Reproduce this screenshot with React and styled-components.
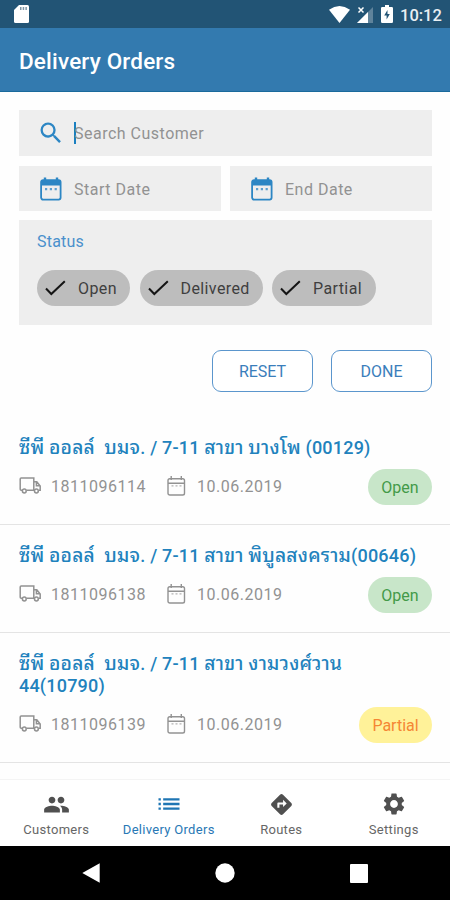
import React from 'react'
import styled, { createGlobalStyle } from 'styled-components'
import { MdSearch, MdPeople, MdList, MdDirections, MdSettings } from 'react-icons/md'

const orders = [
    { name: 'ซีพี ออลล์  บมจ. / 7-11 สาขา บางโพ (00129)', number: '1811096114', date: '10.06.2019', status: 'Open' },
    { name: 'ซีพี ออลล์  บมจ. / 7-11 สาขา พิบูลสงคราม(00646)', number: '1811096138', date: '10.06.2019', status: 'Open' },
    { name: 'ซีพี ออลล์  บมจ. / 7-11 สาขา งามวงศ์วาน\n44(10790)', number: '1811096139', date: '10.06.2019', status: 'Partial' },
]

const tabs = [
    { label: 'Customers', icon: MdPeople, size: 27 },
    { label: 'Delivery Orders', icon: MdList, size: 28, active: true },
    { label: 'Routes', icon: MdDirections, size: 25 },
    { label: 'Settings', icon: MdSettings, size: 26 },
]

function SdCard() {
    return (
        <svg width="15" height="18" viewBox="0 0 15 18">
            <path d="M5 0h8.500Q15 0 15 1.500v15Q15 18 13.500 18H1.500Q0 18 0 16.500V5z" fill="#fff" />
            <path d="M6 2h1.500v3H6zM8.700 2h1.500v3H8.700zM11.400 2h1.500v3h-1.500z" fill="#7f97a8" />
        </svg>
    )
}

function Wifi() {
    return (
        <svg width="21" height="17" viewBox="0 0 21 17">
            <path d="M0 3.800Q10.500-3.600 21 3.800L10.500 17z" fill="#fff" />
        </svg>
    )
}

function Signal() {
    return (
        <svg width="17" height="17" viewBox="0 0 17 17">
            <path d="M16 1v16H0z" fill="#fff" opacity=".28" />
            <path d="M11 6v11H0z" fill="#fff" />
            <path d="M1.500 1.500l5 5M6.500 1.500l-5 5" stroke="#fff" strokeWidth="1.500" />
        </svg>
    )
}

function Battery() {
    return (
        <svg width="12" height="18" viewBox="0 0 12 18">
            <path d="M4 0h4v2h2.800Q12 2 12 3.200v13.600Q12 18 10.800 18H1.200Q0 18 0 16.800V3.200Q0 2 1.200 2H4z" fill="#fff" />
            <path d="M6.500 5L3.200 10.500h2.400V14.500L8.800 9H6.500z" fill="#225475" />
        </svg>
    )
}

function Calendar({ filled }) {
    return filled ? (
        <svg width="22" height="24" viewBox="0 0 22 24">
            <rect x="1.100" y="3.100" width="19.500" height="19.500" rx="2" fill="none" stroke="currentColor" strokeWidth="1.800" />
            <path d="M1 4h20v4.500H1zM3.800.5h2.400V5H3.800zM15.800.5h2.400V5h-2.400z" fill="currentColor" />
            <path d="M5 11h2.200v2.200H5zM9.800 11H12v2.200H9.800zM14.600 11h2.200v2.200h-2.200z" fill="currentColor" opacity=".75" />
        </svg>
    ) : (
        <svg width="19" height="20" viewBox="0 0 19 20">
            <rect x="1" y="2.800" width="16.500" height="16.200" rx="1.800" fill="none" stroke="currentColor" strokeWidth="1.400" />
            <path d="M1 7.200h16.500M4.200 0v4M14.300 0v4" fill="none" stroke="currentColor" strokeWidth="1.400" />
            <path d="M4.500 9.800h10" stroke="currentColor" strokeWidth="1.300" strokeDasharray="2 2" opacity=".7" />
        </svg>
    )
}

function Truck() {
    return (
        <svg width="22" height="17" viewBox="0 0 22 17" fill="none" stroke="currentColor" strokeWidth="1.500">
            <path d="M3.200 13.200H2.200Q1.200 13.200 1.200 12.200V2Q1.200 1 2.200 1H14.800V13.200H7.500M14.800 4.800h3L21.200 9v4.200H20M17.400 5v3.800h3.600" />
            <circle cx="5.300" cy="14" r="1.900" />
            <circle cx="17.400" cy="14" r="1.900" />
        </svg>
    )
}

function Check() {
    return (
        <svg width="21" height="16" viewBox="0 0 21 16">
            <path d="M1 8.500l5.300 5.500L19.800 1.200" fill="none" stroke="#151515" strokeWidth="2" />
        </svg>
    )
}

// Thai runs are set a little larger than the Latin text around them
function Name({ children }) {
    return children.split(/([\u0E00-\u0E7F]+)/).map((part, i) => (
        i % 2 ? <Thai key={i}>{part}</Thai> : part
    ))
}

function App() {
    return (
        <Screen>
            <GlobalStyle />
            <StatusBar>
                <SdCard />
                <StatusIcons>
                    <Wifi />
                    <Signal />
                    <Battery />
                    <Clock>10:12</Clock>
                </StatusIcons>
            </StatusBar>
            <Header>Delivery Orders</Header>

            <Filters>
                <Field $height={46}>
                    <FieldIcon $pull><MdSearch size={28} /></FieldIcon>
                    <Caret />
                    <Placeholder $afterCaret>Search Customer</Placeholder>
                </Field>
                <Dates>
                    <Field $height={45}>
                        <FieldIcon><Calendar filled /></FieldIcon>
                        <Placeholder>Start Date</Placeholder>
                    </Field>
                    <Field $height={45}>
                        <FieldIcon><Calendar filled /></FieldIcon>
                        <Placeholder>End Date</Placeholder>
                    </Field>
                </Dates>
                <StatusBox>
                    <StatusLabel>Status</StatusLabel>
                    <Chips>
                        <Chip $width={93}><Check />Open</Chip>
                        <Chip $width={123}><Check />Delivered</Chip>
                        <Chip $width={104}><Check />Partial</Chip>
                    </Chips>
                </StatusBox>
                <Actions>
                    <Button>RESET</Button>
                    <Button>DONE</Button>
                </Actions>
            </Filters>

            <List>
                {orders.map((order) => (
                    <Order key={order.number}>
                        <OrderName><Name>{order.name}</Name></OrderName>
                        <OrderMeta>
                            <Truck />
                            <OrderNumber>{order.number}</OrderNumber>
                            <Calendar />
                            <OrderDate>{order.date}</OrderDate>
                            <Badge $partial={order.status === 'Partial'}>{order.status}</Badge>
                        </OrderMeta>
                    </Order>
                ))}
            </List>

            <TabBar>
                {tabs.map(({ label, icon: Icon, size, active }) => (
                    <Tab key={label} $active={active}>
                        <TabIcon><Icon size={size} /></TabIcon>
                        {label}
                    </Tab>
                ))}
            </TabBar>
            <SystemBar>
                <SystemKey>
                    <svg width="18" height="20" viewBox="0 0 18 20"><path d="M17.700.3v19.400L.3 10z" fill="#fff" /></svg>
                </SystemKey>
                <SystemKey>
                    <svg width="20" height="20" viewBox="0 0 20 20"><circle cx="10" cy="10" r="9.700" fill="#fff" /></svg>
                </SystemKey>
                <SystemKey>
                    <svg width="18" height="19" viewBox="0 0 18 19"><rect width="18" height="19" rx="1" fill="#fff" /></svg>
                </SystemKey>
            </SystemBar>
        </Screen>
    )
}

export default App

const GlobalStyle = createGlobalStyle`
    * {
        box-sizing: border-box;
    }
    body {
        margin: 0;
        background: #fff;
    }
    svg {
        display: block;
        flex-shrink: 0;
    }
`

const Screen = styled.div`
    width: 450px;
    height: 900px;
    display: flex;
    flex-direction: column;
    overflow: hidden;
    background: #fefefe;
    font-family: Roboto, "Noto Sans", sans-serif;
`

const StatusBar = styled.div`
    height: 28px;
    flex-shrink: 0;
    display: flex;
    align-items: center;
    justify-content: space-between;
    padding: 0 7px 0 14px;
    background: #225475;
`

const StatusIcons = styled.div`
    display: flex;
    align-items: center;
    gap: 7px;
`

const Clock = styled.span`
    width: 43px;
    margin-top: 2px;
    font-size: 16.5px;
    font-weight: 500;
    color: #e9eff3;
    white-space: nowrap;
`

const Header = styled.div`
    height: 64px;
    flex-shrink: 0;
    padding: 3px 19px 0;
    display: flex;
    align-items: center;
    background: #337aaf;
    border-bottom: 1px solid #1a6a9c;
    color: #fff;
    font-size: 22.5px;
    font-weight: 500;
    letter-spacing: 0.18px;
`

const Filters = styled.div`
    flex-shrink: 0;
    padding: 18px 18px 0 19px;
    display: flex;
    flex-direction: column;
    gap: 9px;
`

const Field = styled.div`
    flex: 1;
    min-height: ${(props) => props.$height}px;
    display: flex;
    align-items: center;
    padding-left: 18px;
    background: #eee;
`

const FieldIcon = styled.div`
    width: 37px;
    padding-left: ${(props) => (props.$pull ? 0 : 3)}px;
    display: flex;
    color: #2c86c4;
`

const Caret = styled.div`
    width: 2px;
    height: 22px;
    background: #1a7fc0;
`

const Placeholder = styled.span`
    margin-left: ${(props) => (props.$afterCaret ? -2 : 0)}px;
    padding-top: 1px;
    font-size: 16px;
    letter-spacing: 0.5px;
    color: #929292;
`

const Dates = styled.div`
    margin-top: 1px;
    display: flex;
    gap: 9px;
`

const StatusBox = styled.div`
    height: 105px;
    padding: 12px 18px;
    background: #eee;
`

const StatusLabel = styled.div`
    font-size: 16px;
    line-height: 20px;
    letter-spacing: 0.2px;
    color: #4a90cc;
`

const Chips = styled.div`
    margin-top: 18px;
    display: flex;
    gap: 9.5px;
`

const Chip = styled.div`
    width: ${(props) => props.$width}px;
    height: 36px;
    padding-left: 8px;
    display: flex;
    align-items: center;
    gap: 12px;
    border-radius: 18px;
    background: #bdbdbd;
    color: #3f3f3f;
    font-size: 16px;
    letter-spacing: 0.4px;
`

const Actions = styled.div`
    margin-top: 16px;
    display: flex;
    justify-content: flex-end;
    gap: 18px;
`

const Button = styled.button`
    width: 101px;
    height: 42px;
    padding: 0;
    border: 1px solid #5b96cd;
    border-radius: 9px;
    background: #fff;
    color: #3a7ebb;
    font-family: inherit;
    font-size: 16px;
`

const List = styled.div`
    flex: 1;
    min-height: 0;
    padding-top: 25px;
`

const Order = styled.div`
    padding: 20px 18px 19px 19px;
    border-bottom: 1px solid #e4e4e4;
`

const OrderName = styled.div`
    font-size: 18px;
    font-weight: 500;
    line-height: 22px;
    letter-spacing: 0.2px;
    white-space: pre;
    color: #2182bd;
`

const Thai = styled.span`
    font-family: "Noto Sans Thai Looped", "Noto Looped Thai", "Droid Sans Thai", Loma, Garuda, Waree, Roboto, "Noto Sans", sans-serif;
    font-size: 19.2px;
    line-height: 0;
`

const OrderMeta = styled.div`
    margin-top: 10px;
    height: 36px;
    display: flex;
    align-items: center;
    color: #929292;
    font-size: 16px;
    letter-spacing: 0.5px;

    svg {
        margin-top: -3px;
    }
`

const OrderNumber = styled.span`
    width: 116px;
    margin: -2px 0 0 10px;
`

const OrderDate = styled.span`
    margin: -2px 0 0 11px;
`

const Badge = styled.span`
    width: ${(props) => (props.$partial ? 73 : 64)}px;
    height: 36px;
    margin-left: auto;
    display: flex;
    align-items: center;
    justify-content: center;
    border-radius: 18px;
    letter-spacing: 0;
    background: ${(props) => (props.$partial ? '#fff299' : '#c8e6c9')};
    color: ${(props) => (props.$partial ? '#f58634' : '#439a48')};
`

const TabBar = styled.div`
    height: 67px;
    flex-shrink: 0;
    display: grid;
    grid-template-columns: repeat(4, 1fr);
    border-top: 1px solid #f4f4f4;
    background: #fff;
`

const Tab = styled.div`
    padding-top: 11px;
    display: flex;
    flex-direction: column;
    align-items: center;
    gap: 4px;
    white-space: nowrap;
    font-size: 13px;
    line-height: 18px;
    letter-spacing: 0.3px;
    color: ${(props) => (props.$active ? '#2878b5' : '#666')};

    svg {
        color: ${(props) => (props.$active ? '#1f76b4' : '#505050')};
    }
`

const TabIcon = styled.div`
    height: 26px;
    display: flex;
    align-items: center;
`

const SystemBar = styled.div`
    height: 54px;
    flex-shrink: 0;
    padding: 0 24px;
    display: grid;
    grid-template-columns: repeat(3, 1fr);
    background: #000;
`

const SystemKey = styled.div`
    display: flex;
    align-items: center;
    justify-content: center;
`
